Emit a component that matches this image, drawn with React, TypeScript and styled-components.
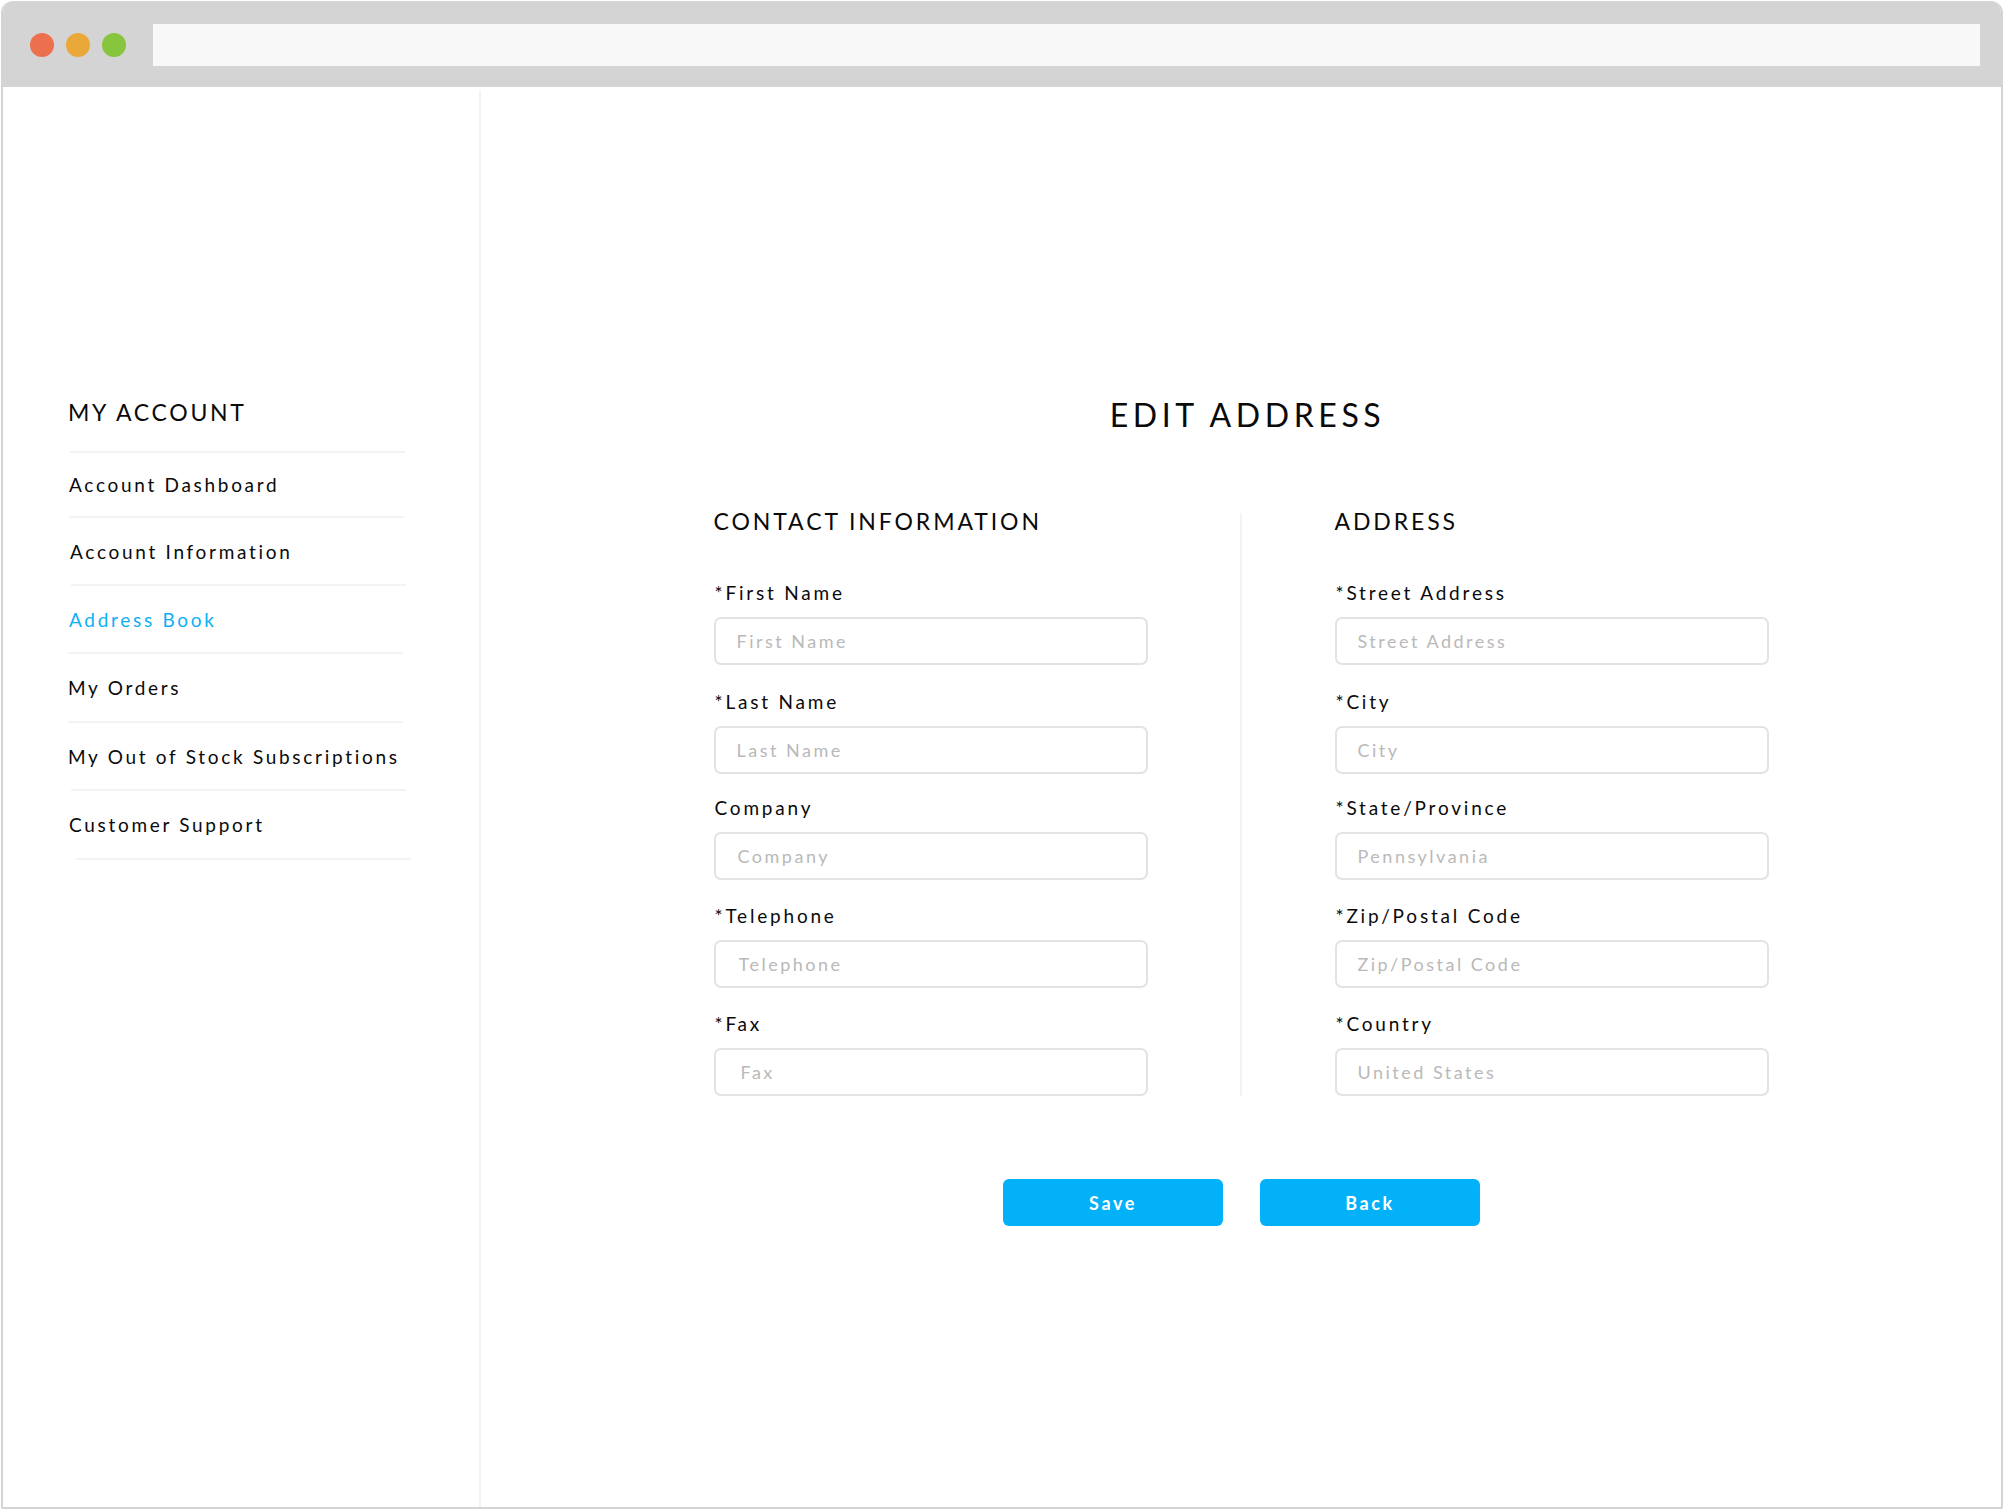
import styled, { createGlobalStyle } from "styled-components";

type TField = {
  label: string;
  placeholder: string;
  inset?: number;
  gap?: number;
};

const contactFields: TField[] = [
  { label: "*First Name", placeholder: "First Name", inset: 21, gap: 0 },
  { label: "*Last Name", placeholder: "Last Name", inset: 21, gap: 25 },
  { label: "Company", placeholder: "Company", inset: 22, gap: 22 },
  { label: "*Telephone", placeholder: "Telephone", inset: 23, gap: 24 },
  { label: "*Fax", placeholder: "Fax", inset: 25, gap: 24 },
];

const addressFields: TField[] = [
  { label: "*Street Address", placeholder: "Street Address", inset: 21, gap: 0 },
  { label: "*City", placeholder: "City", inset: 21, gap: 25 },
  { label: "*State/Province", placeholder: "Pennsylvania", inset: 21, gap: 22 },
  { label: "*Zip/Postal Code", placeholder: "Zip/Postal Code", inset: 21, gap: 24 },
  { label: "*Country", placeholder: "United States", inset: 21, gap: 24 },
];

const navItems = [
  { label: "Account Dashboard", height: 63, textX: 1, ruleX: 1 },
  { label: "Account Information", height: 66, textX: 2, ruleX: 3 },
  { label: "Address Book", height: 66, active: true, textX: 1, ruleX: 0 },
  { label: "My Orders", height: 67, textX: 0, ruleX: 0 },
  { label: "My Out of Stock Subscriptions", height: 66, textX: 0, ruleX: 3 },
  { label: "Customer Support", height: 67, textX: 1, ruleX: 8 },
];

const Field = ({ label, placeholder, inset, gap }: TField) => (
  <FieldGroup $gap={gap ?? 0}>
    <FieldLabel>{label}</FieldLabel>
    <FieldInput $inset={inset ?? 21} placeholder={placeholder} />
  </FieldGroup>
);

const App = () => (
  <>
    <GlobalStyle />
    <BrowserWindow>
      <Toolbar>
        <Dot $color="#ec6f4e" />
        <Dot $color="#e9a837" />
        <Dot $color="#86c53d" />
        <UrlBar />
      </Toolbar>
      <Content>
        <Sidebar>
          <SidebarTitle>MY ACCOUNT</SidebarTitle>
          <Rule $x={2} />
          {navItems.map((item) => (
            <div key={item.label}>
              <NavItem $height={item.height} $x={item.textX} $active={item.active}>
                {item.label}
              </NavItem>
              <Rule $x={item.ruleX} />
            </div>
          ))}
        </Sidebar>
        <Main>
          <PageTitle>EDIT ADDRESS</PageTitle>
          <FormColumns>
            <FormColumn>
              <SectionTitle>CONTACT INFORMATION</SectionTitle>
              {contactFields.map((field) => (
                <Field key={field.label} {...field} />
              ))}
            </FormColumn>
            <ColumnDivider />
            <FormColumn>
              <SectionTitle>ADDRESS</SectionTitle>
              {addressFields.map((field) => (
                <Field key={field.label} {...field} />
              ))}
            </FormColumn>
          </FormColumns>
          <Actions>
            <ActionButton type="button">Save</ActionButton>
            <ActionButton type="button">Back</ActionButton>
          </Actions>
        </Main>
      </Content>
    </BrowserWindow>
  </>
);

const GlobalStyle = createGlobalStyle`
  html, body {
    margin: 0;
    background: #fff;
  }

  * {
    box-sizing: border-box;
  }

  body {
    font-family: Lato, "Noto Sans", sans-serif;
    color: #0a0a0a;
  }
`;

const BrowserWindow = styled.div`
  width: 2002px;
  height: 1508px;
  margin: 1px;
  display: flex;
  flex-direction: column;
  overflow: hidden;
  border: 2px solid #d4d4d4;
  border-top-width: 0;
  border-radius: 12px 12px 2px 2px;
`;

const Toolbar = styled.div`
  height: 86px;
  margin: 0 -2px;
  flex: none;
  display: flex;
  align-items: center;
  padding: 2px 23px 0 29px;
  background: #d4d4d4;
`;

const Dot = styled.span<{ $color: string }>`
  width: 24px;
  height: 24px;
  margin-right: 12px;
  flex: none;
  border-radius: 50%;
  background: ${(p) => p.$color};
`;

const UrlBar = styled.div`
  height: 42px;
  margin-left: 15px;
  flex: 1;
  background: #f8f8f8;
`;

const Content = styled.div`
  flex: 1;
  display: flex;
  min-height: 0;
`;

const Sidebar = styled.aside`
  width: 478px;
  margin-top: 3px;
  flex: none;
  padding: 308px 0 0 65px;
  border-right: 2px solid #f3f3f3;
`;

const SidebarTitle = styled.h2`
  height: 53px;
  margin: 0;
  font-size: 23px;
  font-weight: 400;
  line-height: 28px;
  letter-spacing: 2.7px;
`;

const Rule = styled.div<{ $x: number }>`
  width: 335px;
  height: 2px;
  margin-left: ${(p) => p.$x}px;
  background: #f3f3f3;
`;

const NavItem = styled.a<{ $height: number; $x: number; $active?: boolean }>`
  height: ${(p) => p.$height}px;
  display: flex;
  align-items: center;
  padding-left: ${(p) => p.$x}px;
  font-size: 19px;
  letter-spacing: 2.7px;
  color: ${(p) => (p.$active ? "#0db0f5" : "#0a0a0a")};
`;

const Main = styled.main`
  flex: 1;
  min-width: 0;
  display: flex;
  flex-direction: column;
  align-items: center;
  padding-top: 309px;
`;

const PageTitle = styled.h1`
  height: 38px;
  margin: 0 0 73px 13px;
  font-size: 32px;
  font-weight: 400;
  line-height: 38px;
  letter-spacing: 4.6px;
`;

const FormColumns = styled.div`
  display: grid;
  grid-template-columns: 434px 2px 434px;
  column-gap: 92.5px;
`;

const FormColumn = styled.section`
  display: flex;
  flex-direction: column;
`;

const ColumnDivider = styled.div`
  margin-top: 6px;
  background: #f3f3f3;
`;

const SectionTitle = styled.h3`
  height: 28px;
  margin: 0 0 46px;
  font-size: 23px;
  font-weight: 400;
  line-height: 28px;
  letter-spacing: 2.9px;
`;

const FieldGroup = styled.div<{ $gap: number }>`
  margin-top: ${(p) => p.$gap}px;
`;

const FieldLabel = styled.label`
  height: 24px;
  margin-bottom: 12px;
  padding-left: 1px;
  display: block;
  font-size: 19px;
  line-height: 24px;
  letter-spacing: 2.8px;
`;

const FieldInput = styled.input<{ $inset: number }>`
  width: 100%;
  height: 48px;
  display: block;
  padding: 0 0 0 ${(p) => p.$inset}px;
  border: 2px solid #e3e3e3;
  border-radius: 7px;
  outline: none;
  background: #fff;
  font-family: inherit;
  font-size: 18px;
  letter-spacing: 2.5px;

  &::placeholder {
    color: #b9b9b9;
    opacity: 1;
  }
`;

const Actions = styled.div`
  margin-top: 83px;
  margin-left: 1px;
  display: flex;
  gap: 37px;
`;

const ActionButton = styled.button`
  width: 220px;
  height: 47px;
  border: 0;
  border-radius: 6px;
  background: #02b1f8;
  color: #fff;
  font-family: inherit;
  font-size: 18px;
  font-weight: 700;
  letter-spacing: 2.6px;
`;

export default App;
